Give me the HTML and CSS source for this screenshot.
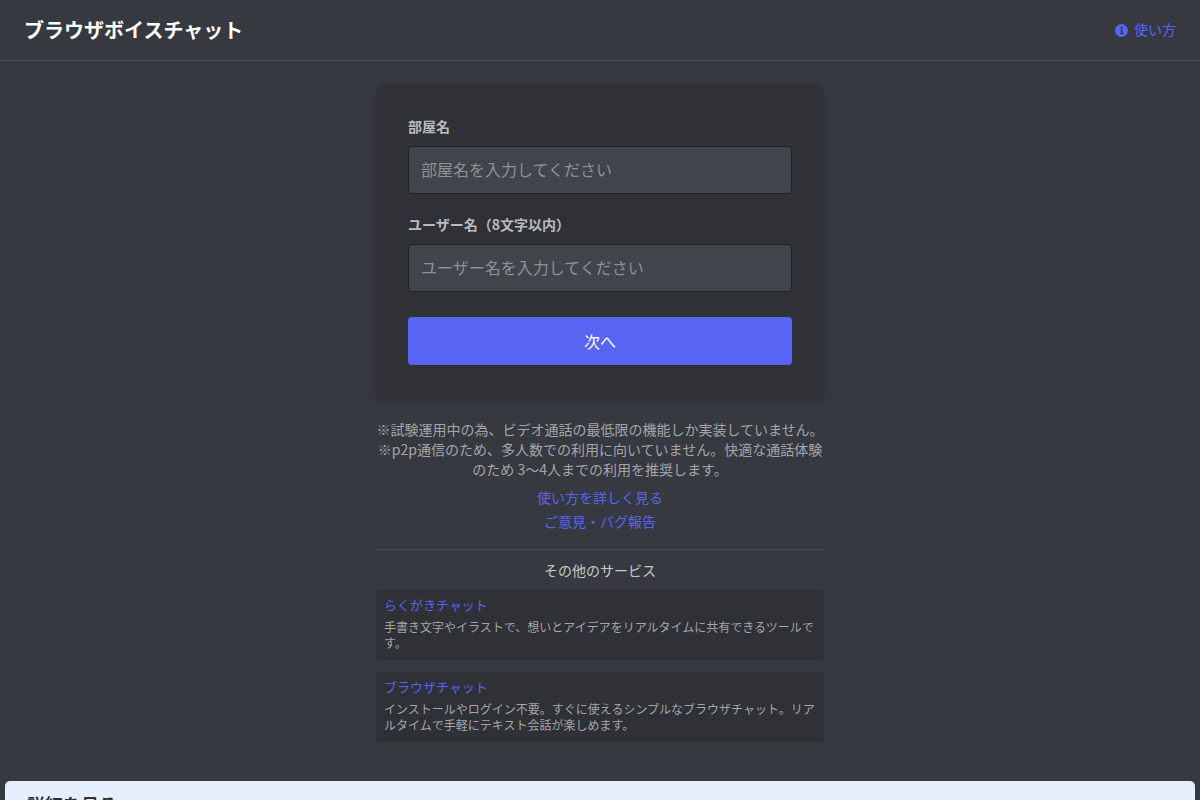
FILE: index.html
```html
<!DOCTYPE html>
<html lang="ja">
<head>
<meta charset="utf-8">
<title>ブラウザボイスチャット</title>
<link rel="stylesheet" href="styles.css">
</head>
<body>
<header class="header">
  <h1 class="brand">ブラウザボイスチャット</h1>
  <a class="help" href="#">
    <svg class="help-icon" viewBox="0 0 16 16" aria-hidden="true"><circle cx="8" cy="8" r="8" fill="#5865f2"/><path d="M6.4 7h2.8v4.2h1v1H6.4v-1h1V8h-1z" fill="#2f3136"/><circle cx="8.1" cy="4.8" r="1.3" fill="#2f3136"/></svg>
    <span class="help-text">使い方</span>
  </a>
</header>
<main class="main">
  <form class="card">
    <label class="label" for="room">部屋名</label>
    <input class="input" id="room" placeholder="部屋名を入力してください">
    <label class="label label-second" for="user">ユーザー名（8文字以内）</label>
    <input class="input" id="user" placeholder="ユーザー名を入力してください">
    <button class="button" type="button">次へ</button>
  </form>
  <div class="notes">
    <p>※試験運用中の為、ビデオ通話の最低限の機能しか実装していません。</p>
    <p>※p2p通信のため、多人数での利用に向いていません。快適な通話体験のため 3〜4人までの利用を推奨します。</p>
  </div>
  <div class="links">
    <a href="#">使い方を詳しく見る</a>
    <a href="#">ご意見・バグ報告</a>
  </div>
  <section class="services">
    <h2 class="services-title">その他のサービス</h2>
    <article class="service">
      <a href="#">らくがきチャット</a>
      <p>手書き文字やイラストで、想いとアイデアをリアルタイムに共有できるツールです。</p>
    </article>
    <article class="service">
      <a href="#">ブラウザチャット</a>
      <p>インストールやログイン不要。すぐに使えるシンプルなブラウザチャット。リアルタイムで手軽にテキスト会話が楽しめます。</p>
    </article>
  </section>
</main>
<section class="details">
  <h2>詳細を見る</h2>
</section>
</body>
</html>
```

FILE: styles.css
```css
* { box-sizing: border-box; }
html, body { height: 800px; overflow: hidden; }
body {
  margin: 0;
  background: #36393f;
  color: #dcddde;
  font-family: "Noto Sans CJK JP", "Liberation Sans", sans-serif;
}
a { color: #5865f2; text-decoration: none; }
p { margin: 0; }
.header {
  height: 61px;
  padding: 0 24px;
  display: flex;
  align-items: center;
  justify-content: space-between;
  border-bottom: 1px solid #4a4d52;
}
.brand { margin: 0; font-size: 20px; line-height: 28px; font-weight: 700; color: #fff; }
.help { display: flex; align-items: center; gap: 6px; font-size: 14px; line-height: 20px; }
.help-icon { width: 13px; height: 13px; }
.help-text { margin-top: -2px; }
.main { width: 448px; margin: 24px auto 0; }
.card {
  background: #2f3136;
  border-radius: 8px;
  padding: 31px 32px 36px;
  box-shadow: 0 2px 10px rgba(0, 0, 0, 0.1);
  display: flex;
  flex-direction: column;
}
.label { font-size: 14px; line-height: 20px; font-weight: 700; color: #b9bbbe; margin-bottom: 10px; }
.label-second { margin-top: 20px; }
.input {
  height: 48px;
  padding: 0 12px 2px;
  background: #40444b;
  border: 1px solid #202225;
  border-radius: 4px;
  color: #dcddde;
  font: 16px "Noto Sans CJK JP", sans-serif;
}
.input::placeholder { color: #8e9297; opacity: 1; }
.button {
  height: 48px;
  margin-top: 25px;
  background: #5865f2;
  border: 0;
  border-radius: 4px;
  color: #fff;
  font: 400 16px "Noto Sans CJK JP", sans-serif;
}
.notes { margin-top: 18px; font-size: 14px; line-height: 20px; color: #a3a6aa; text-align: center; }
.links { margin-top: 6px; display: flex; flex-direction: column; align-items: center; font-size: 14px; line-height: 24px; }
.services { margin-top: 16px; border-top: 1px solid #4a4d52; }
.services-title { margin: 10px 0 10px; font-size: 14px; line-height: 20px; font-weight: 400; text-align: center; color: #c8c9cb; }
.service { height: 70px; margin-bottom: 12px; padding: 6px 8px; background: #2f3136; border-radius: 4px; }
.service a { display: block; font-size: 13px; line-height: 17px; }
.service p { margin-top: 6px; font-size: 12px; line-height: 16px; color: #a3a6aa; }
.details {
  position: fixed;
  left: 5px;
  right: 5px;
  top: 781px;
  height: 60px;
  padding: 10px 22px;
  background: #e8effc;
  border-radius: 5px;
}
.details h2 { margin: 0; font-size: 18px; line-height: 26px; font-weight: 700; color: #2f3136; }
```
